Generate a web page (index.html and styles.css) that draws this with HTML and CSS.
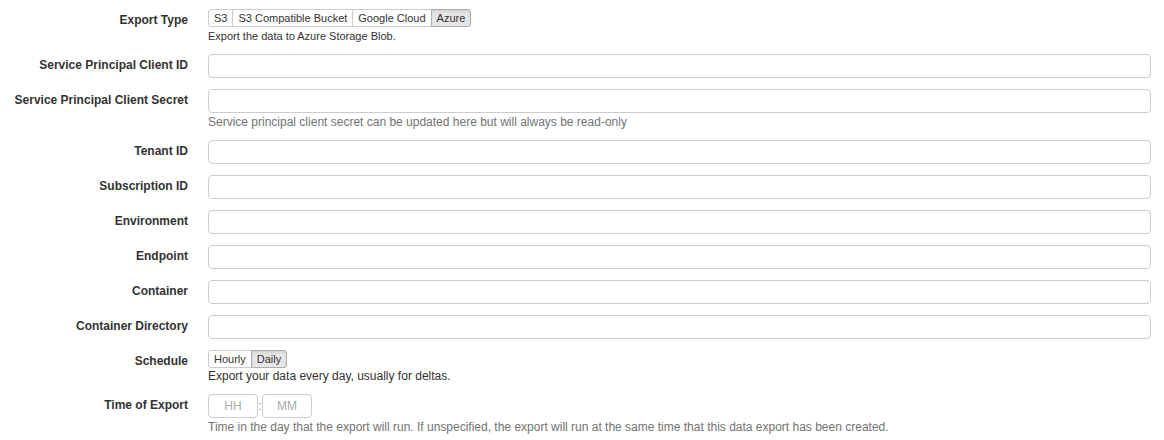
FILE: index.html
```html
<!DOCTYPE html>
<html>
<head>
<meta charset="utf-8">
<link rel="stylesheet" href="styles.css">
</head>
<body>
<form class="form">
  <div class="row">
    <label class="label">Export Type</label>
    <div class="field">
      <div class="seg">
        <span class="seg-btn">S3</span><span class="seg-btn">S3 Compatible Bucket</span><span class="seg-btn">Google Cloud</span><span class="seg-btn active">Azure</span>
      </div>
      <div class="help dark small">Export the data to Azure Storage Blob.</div>
    </div>
  </div>
  <div class="row">
    <label class="label">Service Principal Client ID</label>
    <div class="field"><input class="input" type="text"></div>
  </div>
  <div class="row">
    <label class="label">Service Principal Client Secret</label>
    <div class="field">
      <input class="input" type="text">
      <div class="help gray">Service principal client secret can be updated here but will always be read-only</div>
    </div>
  </div>
  <div class="row">
    <label class="label">Tenant ID</label>
    <div class="field"><input class="input" type="text"></div>
  </div>
  <div class="row">
    <label class="label">Subscription ID</label>
    <div class="field"><input class="input" type="text"></div>
  </div>
  <div class="row">
    <label class="label">Environment</label>
    <div class="field"><input class="input" type="text"></div>
  </div>
  <div class="row">
    <label class="label">Endpoint</label>
    <div class="field"><input class="input" type="text"></div>
  </div>
  <div class="row">
    <label class="label">Container</label>
    <div class="field"><input class="input" type="text"></div>
  </div>
  <div class="row">
    <label class="label">Container Directory</label>
    <div class="field"><input class="input" type="text"></div>
  </div>
  <div class="row">
    <label class="label">Schedule</label>
    <div class="field">
      <div class="seg">
        <span class="seg-btn">Hourly</span><span class="seg-btn active">Daily</span>
      </div>
      <div class="help dark">Export your data every day, usually for deltas.</div>
    </div>
  </div>
  <div class="row">
    <label class="label">Time of Export</label>
    <div class="field">
      <div class="time">
        <input class="input time-input" type="text" placeholder="HH"><span class="colon">:</span><input class="input time-input" type="text" placeholder="MM">
      </div>
      <div class="help gray">Time in the day that the export will run. If unspecified, the export will run at the same time that this data export has been created.</div>
    </div>
  </div>
</form>
</body>
</html>
```
FILE: styles.css
```css
html, body {
  margin: 0;
  padding: 0;
  background: #fff;
}
body {
  font-family: "Liberation Sans", Arial, sans-serif;
  color: #333;
}
.form {
  display: flex;
  flex-direction: column;
  gap: 11px;
  padding: 9px 13px 0 0;
}
.row {
  display: flex;
  align-items: flex-start;
  gap: 20px;
}
.label {
  flex: 0 0 188px;
  text-align: right;
  font-size: 12px;
  font-weight: bold;
  line-height: 22px;
  color: #333;
}
.field {
  flex: 1 1 auto;
  display: flex;
  flex-direction: column;
  align-items: flex-start;
  min-width: 0;
}
.input {
  box-sizing: border-box;
  width: 100%;
  height: 24px;
  margin: 0;
  border: 1px solid #ccc;
  border-radius: 4px;
  background: #fff;
  font-family: inherit;
  font-size: 12px;
  padding: 2px 6px;
  outline: none;
}
.row .input + .help,
.time + .help {
  margin-top: 2px;
}
.field > .input {
  align-self: stretch;
}
.seg {
  display: inline-flex;
}
.seg-btn {
  font-size: 11px;
  line-height: 16px;
  padding: 0 5px;
  border: 1px solid #ccc;
  margin-left: -1px;
  background: #fff;
  color: #333;
}
.seg-btn:first-child {
  margin-left: 0;
  border-radius: 3px 0 0 3px;
}
.seg-btn:last-child {
  border-radius: 0 3px 3px 0;
}
.seg-btn.active {
  background: #e6e6e6;
  border-color: #adadad;
  box-shadow: inset 0 2px 3px rgba(0,0,0,0.08);
  position: relative;
}
.help {
  font-size: 12px;
  line-height: 14px;
  margin-top: 1px;
}
.help.small {
  font-size: 11px;
  margin-top: 2px;
}
.help.dark { color: #333; }
.help.gray { color: #737373; }
.time {
  display: flex;
  align-items: center;
}
.time-input {
  width: 50px;
  text-align: center;
}
.time-input::placeholder {
  color: #aaa;
}
.colon {
  font-size: 12px;
  color: #999;
  width: 4px;
  text-align: center;
}
```
